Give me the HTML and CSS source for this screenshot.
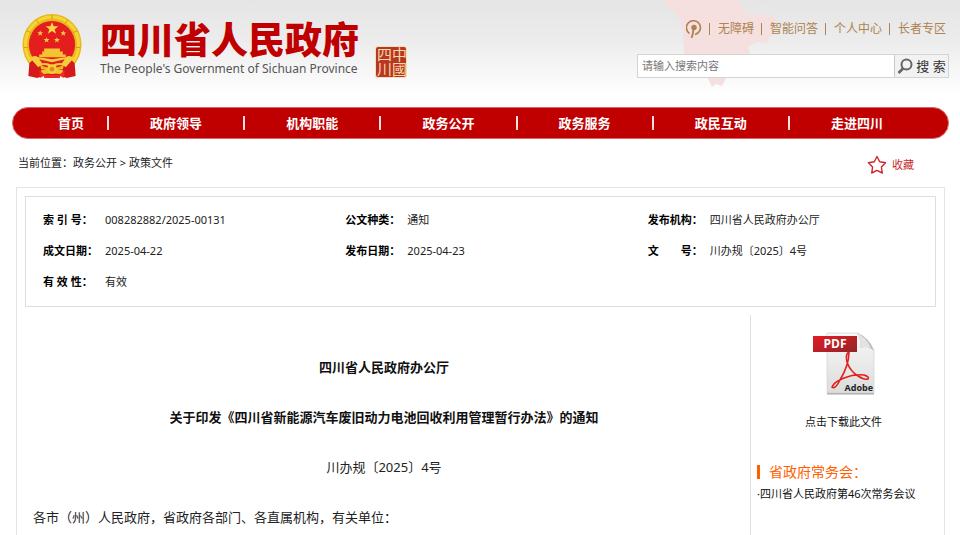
FILE: index.html
```html
<!DOCTYPE html>
<html lang="zh-CN">

<head>
  <meta charset="UTF-8">
  <meta name="viewport" content="width=device-width, initial-scale=1.0">
  <title>四川省人民政府</title>
  <link rel="stylesheet" href="styles.css">
</head>

<body>
  <header class="header">
    <svg class="map" viewBox="0 0 120 90" aria-hidden="true">
      <path d="M4 0 L8 7 L15 12 L20 20 L23 30 L24 54 L34 60 L42 64 L48 78 L52 87 L56 84 L62 86 L66 78 L70 66 L80 60 L90 53 L88 47 L97 42 L107 43 L109 37 L115 31 L113 27 L119 22 L107 13 L100 16 L93 15 L85 12 L82 6 L78 0 Z" fill="#f6dfdf"/>
    </svg>

    <div class="brand">
      <svg class="emblem" viewBox="0 0 60 66" aria-hidden="true">
        <ellipse cx="30" cy="31" rx="30" ry="31" fill="#e9b91c"/>
        <ellipse cx="30" cy="31" rx="27" ry="28" fill="none" stroke="#f5d536" stroke-width="3"/>
        <path d="M30 1v5M14 6l3 4M46 6l-3 4M4 17l5 2M56 17l-5 2M1 34h5M59 34h-5" stroke="#d79a14"/>
        <ellipse cx="30" cy="31" rx="23.500" ry="24" fill="#e41d1f"/>
        <path d="M30 8l1.700 4.500h4.800l-3.800 2.900 1.400 4.600-4.100-2.800-4.100 2.800 1.400-4.600-3.800-2.900h4.800z" fill="#fbd743"/>
        <path id="star" d="M18 16.500l.8 2h2.200l-1.700 1.300.7 2.200-2-1.300-2 1.300.7-2.200-1.700-1.300h2.200z" fill="#f8c93a"/>
        <use href="#star" x="23.500"/>
        <use href="#star" x="6.500" y="7"/>
        <use href="#star" x="17" y="7"/>
        <path d="M22 35h16v3h3v3h3v3H17v-3h3v-3h2z" fill="#f5c433"/>
        <path d="M7 50l4-4q8 6 8 10h22q0-4 8-10l4 4 1 13-9 2-6-2-4 2H25l-4-2-6 2-9-2z" fill="#d4181c"/>
        <path d="M8 45q4-4 8-1l14 2 14-2q4-3 8 1l-8 9q-3-3-8-2l-6 2-6-2q-5-1-8 2z" fill="#f4cd3c"/>
        <path d="M17 46l13 3 13-3-3 4q-5-1-10 2-5-3-10-2z" fill="#e41d1f"/>
        <path d="M19 57q11-4 22 0v5q-11-3-22 0z" fill="#f0c22f"/>
        <circle cx="30" cy="56" r="5" fill="#f4cd3c"/>
        <circle cx="30" cy="56" r="2.500" fill="#dd8f1c"/>
        <path d="M17 57l6 5-5 3zM43 57l-6 5 5 3zM22 62h16v3H22z" fill="#ee2b25"/>
      </svg>
      <div class="brand-text">
        <h1 class="brand-name">四川省人民政府</h1>
        <p class="brand-en">The People's Government of Sichuan Province</p>
      </div>
      <div class="seal">中國四川</div>
    </div>

    <div class="tools">
      <ul class="top-links">
        <li>
          <a href="#" aria-label="无障碍浏览">
            <svg class="access-icon" viewBox="0 0 16 18" aria-hidden="true">
              <path d="M3.500 13.500A7 7 0 1 1 9 14.500" fill="none" stroke="#ad8350" stroke-width="1.600"/>
              <circle cx="8" cy="7.500" r="2.700" fill="#ad8350"/>
              <path d="M7.500 8q0 5-2 10" fill="none" stroke="#ad8350" stroke-width="1.800"/>
            </svg>
          </a>
        </li>
        <li><a href="#">无障碍</a></li>
        <li><a href="#">智能问答</a></li>
        <li><a href="#">个人中心</a></li>
        <li><a href="#">长者专区</a></li>
      </ul>
      <form class="search">
        <input class="search-input" type="text" placeholder="请输入搜索内容" aria-label="请输入搜索内容">
        <button class="search-btn" type="submit">
          <svg class="search-icon" viewBox="0 0 16 16" aria-hidden="true">
            <circle cx="9.500" cy="6.500" r="5" fill="none" stroke="#666" stroke-width="2"/>
            <path d="M6 10.500l-4.500 4.500" stroke="#666" stroke-width="2.600"/>
          </svg>
          搜 索
        </button>
      </form>
    </div>
  </header>

  <nav class="nav">
    <ul class="nav-list">
      <li class="nav-item nav-home"><a href="#">首页</a></li>
      <li class="nav-item"><a href="#">政府领导</a></li>
      <li class="nav-item"><a href="#">机构职能</a></li>
      <li class="nav-item"><a href="#">政务公开</a></li>
      <li class="nav-item"><a href="#">政务服务</a></li>
      <li class="nav-item"><a href="#">政民互动</a></li>
      <li class="nav-item"><a href="#">走进四川</a></li>
    </ul>
  </nav>

  <div class="location">
    <p>当前位置：<a href="#">政务公开</a> &gt; <a href="#">政策文件</a></p>
    <button class="favorite" type="button">
      <svg class="star-icon" viewBox="0 0 20 20" aria-hidden="true">
        <path d="M10 1.500l2.700 5.300 5.900 1-4.200 4.200.9 6-5.300-2.600-5.300 2.600.9-6L1.400 7.800l5.900-1z" fill="none" stroke="#c8282c" stroke-width="1.400" stroke-linejoin="round"/>
      </svg>
      收藏
    </button>
  </div>

  <main class="main">
    <dl class="info">
      <div class="info-item"><dt>索 引 号：</dt><dd>008282882/2025-00131</dd></div>
      <div class="info-item"><dt>公文种类：</dt><dd>通知</dd></div>
      <div class="info-item"><dt>发布机构：</dt><dd>四川省人民政府办公厅</dd></div>
      <div class="info-item"><dt>成文日期：</dt><dd>2025-04-22</dd></div>
      <div class="info-item"><dt>发布日期：</dt><dd>2025-04-23</dd></div>
      <div class="info-item"><dt>文　　号：</dt><dd>川办规〔2025〕4号</dd></div>
      <div class="info-item"><dt>有 效 性：</dt><dd>有效</dd></div>
    </dl>

    <div class="content">
      <article class="article">
        <h2 class="article-title">四川省人民政府办公厅</h2>
        <h2 class="article-title">关于印发《四川省新能源汽车废旧动力电池回收利用管理暂行办法》的通知</h2>
        <p class="article-no">川办规〔2025〕4号</p>
        <p>各市（州）人民政府，省政府各部门、各直属机构，有关单位：</p>
      </article>

      <aside class="aside">
        <a class="download" href="#">
          <svg class="pdf-icon" viewBox="0 0 62 64" aria-hidden="true">
            <defs>
              <linearGradient id="page" x1="0" y1="0" x2="0" y2="1">
                <stop offset="0" stop-color="#f8f8f8"/>
                <stop offset="1" stop-color="#dcdcdc"/>
              </linearGradient>
              <linearGradient id="band" x1="0" y1="0" x2="1" y2="1">
                <stop offset="0" stop-color="#e51b23"/>
                <stop offset="1" stop-color="#8f2528"/>
              </linearGradient>
            </defs>
            <path d="M14 61h47v1.500H14z" fill="#aaa"/>
            <path d="M14 1h31q9 4 16 17v43H14z" fill="url(#page)" stroke="#cfcfcf" stroke-width=".6"/>
            <path d="M44 1q5 8 3 15 8-3 14 3-4-13-17-18z" fill="#bcbcbc"/>
            <path d="M44 1q5 8 3 15 6-2 11 0-5-11-14-15z" fill="#e3e3e3"/>
            <path d="M36 20q-4 2-2 10 3 9 11 14 6 4 10 3 2-2-4-4-10-1-20 3-10 4-12 9 3 3 8-7 9-15 9-28" fill="none" stroke="#e1201e" stroke-width="1.600"/>
            <path d="M0 4h44v16H0z" fill="url(#band)"/>
            <text class="pdf-label" x="22" y="16" text-anchor="middle">PDF</text>
            <text class="adobe-label" x="60" y="59" text-anchor="end">Adobe</text>
          </svg>
          点击下载此文件
        </a>
        <h3 class="aside-title">省政府常务会：</h3>
        <a class="aside-link" href="#">·四川省人民政府第46次常务会议</a>
      </aside>
    </div>
  </main>
</body>

</html>
```
FILE: styles.css
```css
* {
  margin: 0;
  padding: 0;
  box-sizing: border-box;
}

body {
  background: #fff linear-gradient(#e5e5e5, #ececec 40px, #fff 96px) no-repeat;
  background-size: 100% 96px;
  color: #222;
  font-family: "Noto Sans", "Noto Sans CJK SC", sans-serif;
  font-size: 11px;
  line-height: 16px;
  overflow: hidden;
}

a {
  color: inherit;
  text-decoration: none;
}

ul {
  list-style: none;
}

/* header */
.header {
  position: relative;
  display: flex;
  justify-content: space-between;
  padding: 14px 11px 28px 22px;
}

.map {
  position: absolute;
  top: 0;
  right: 180px;
  width: 120px;
  height: 90px;
}

.brand {
  display: flex;
}

.emblem {
  width: 60px;
  height: 65px;
  margin-right: 18px;
}

.brand-text {
  padding-top: 4px;
}

.brand-name {
  color: #c00000;
  font-family: "Noto Sans CJK SC", sans-serif;
  font-size: 37px;
  font-weight: 900;
  line-height: 40px;
}

.brand-en {
  margin-top: 3px;
  color: #555;
  font-size: 12px;
  line-height: 16px;
}

.seal {
  align-self: flex-end;
  width: 32px;
  height: 32px;
  margin: 0 0 1px 16px;
  border: 1px solid #f0e2b4;
  border-radius: 3px;
  background: #b93624;
  color: #f3d9a4;
  font-size: 15px;
  line-height: 15px;
  writing-mode: vertical-rl;
}

.tools {
  position: relative;
  width: 312px;
}

.top-links {
  display: flex;
  justify-content: flex-end;
  align-items: center;
  height: 30px;
  margin-right: 3px;
  color: #ad8350;
  font-size: 12px;
}

.top-links li {
  display: flex;
  align-items: center;
  line-height: 12px;
}

.top-links li + li::before {
  content: "";
  width: 1px;
  height: 12px;
  margin: 0 8px 0 7px;
  background: #ad8350;
}

.access-icon {
  display: block;
  width: 16px;
  height: 18px;
}

.search {
  display: flex;
  height: 24px;
  margin-top: 10px;
  border: 1px solid #d4d4d4;
  background: #fff;
}

.search-input {
  flex: 1;
  min-width: 0;
  padding: 0 4px;
  border: none;
  background: none;
  font: inherit;
}

.search-input::placeholder {
  color: #777;
}

.search-btn {
  display: flex;
  align-items: center;
  justify-content: center;
  gap: 3px;
  width: 54px;
  border: none;
  border-left: 1px solid #c8c8c8;
  background: #f2f2f2;
  color: #333;
  font: inherit;
  font-size: 13px;
  line-height: 16px;
  white-space: nowrap;
  cursor: pointer;
}

.search-icon {
  width: 16px;
  height: 16px;
}

/* nav */
.nav {
  margin: 0 11px 0 12px;
  padding: 8px 24px 8px 22px;
  border: 1px solid #d56a6a;
  border-radius: 17px;
  background: #c00000;
}

.nav-list {
  display: flex;
}

.nav-item {
  flex: 136;
  border-right: 2px solid #f6dede;
  color: #fff;
  font-size: 13px;
  font-weight: bold;
  line-height: 14px;
  text-align: center;
}

.nav-home {
  flex: 73;
}

.nav-item:last-child {
  border-right: none;
}

/* breadcrumb */
.location {
  display: flex;
  justify-content: space-between;
  padding: 16px 46px 12px 18px;
}

.favorite {
  display: flex;
  align-items: center;
  gap: 5px;
  border: none;
  background: none;
  color: #c8282c;
  font: inherit;
  cursor: pointer;
}

.star-icon {
  width: 20px;
  height: 20px;
}

/* document */
.main {
  margin: 0 15px 0 16px;
  padding: 8px;
  border: 1px solid #e4e4e4;
}

.info {
  display: grid;
  grid-template-columns: 303fr 303fr 288fr;
  padding: 7px 0 9px 17px;
  border: 1px solid #dedede;
}

.info-item {
  display: flex;
  gap: 7px;
  line-height: 31px;
}

.info dt {
  min-width: 55px;
  color: #000;
  font-weight: bold;
}

.content {
  display: flex;
  margin-top: 8px;
}

.article {
  flex: 1;
  padding: 27px 15px 0 8px;
  font-size: 13px;
  line-height: 50px;
}

.article-title {
  color: #111;
  font-size: 13px;
  text-align: center;
}

.article-no {
  text-align: center;
}

.aside {
  width: 186px;
  padding: 17px 6px 40px 6px;
  border-left: 1px solid #e0e0e0;
  color: #111;
}

.download {
  display: flex;
  flex-direction: column;
  align-items: center;
  gap: 18px;
}

.pdf-icon {
  width: 62px;
  height: 64px;
}

.pdf-label {
  fill: #fff;
  font-family: "Open Sans", sans-serif;
  font-size: 12px;
  font-weight: bold;
}

.adobe-label {
  fill: #222;
  font-family: "Open Sans", sans-serif;
  font-size: 9px;
  font-weight: bold;
}

.aside-title {
  display: flex;
  align-items: center;
  gap: 9px;
  margin-top: 30px;
  color: #ff6000;
  font-size: 14px;
  font-weight: normal;
  line-height: 24px;
}

.aside-title::before {
  content: "";
  width: 3px;
  height: 14px;
  background: #ff6000;
}

.aside-link {
  display: block;
  line-height: 20px;
  white-space: nowrap;
}
```
